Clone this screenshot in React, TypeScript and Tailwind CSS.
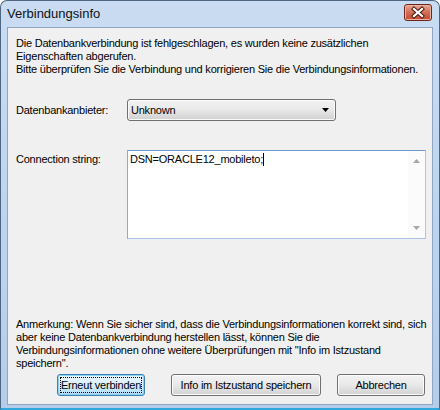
import React from "react";

function WinButton({ label, width, isDefault }: { label: string; width: string; isDefault?: boolean }) {
  return (
    <div
      className={
        "h-[22px] rounded-[3px] border flex items-center justify-center p-[2px] whitespace-nowrap " +
        width +
        (isDefault
          ? " border-[#3c7fb1] bg-gradient-to-b from-[#eaf6fd] via-[#d9f0fc] to-[#a7d9f5] shadow-[inset_0_0_0_1px_#8ad3f7]"
          : " border-[#707070] bg-gradient-to-b from-[#f3f3f3] via-[#e8e8e8] to-[#d2d2d2] shadow-[inset_0_0_0_1px_#fcfcfc]")
      }
    >
      <div
        className={
          "w-full h-full flex items-center justify-center " +
          (isDefault ? "border border-dotted border-black" : "border border-transparent")
        }
      >
        {label}
      </div>
    </div>
  );
}

export default function App() {
  return (
    <div className="w-[440px] h-[410px] bg-white">
      <div className="w-[440px] h-[410px] flex flex-col rounded-t-[7px] border border-[#4f6682] border-b-2 border-b-[#2fa8dc] bg-gradient-to-b from-[#c9dcf2] to-[#b5cdea] px-[6px] pb-[3px] font-['Liberation_Sans',Arial,sans-serif] text-[11px] leading-[13px] tracking-[-0.22px] text-black">
        {/* title bar */}
        <div className="h-[26px] shrink-0 flex items-start">
          <span className="mt-[5px] text-[13px] leading-[16px] tracking-normal text-[#111]">Verbindungsinfo</span>
          <div className="relative ml-auto mr-[1px] mt-[3px] w-[28px] h-[17px] rounded-[3px] border border-[#6e2418] bg-gradient-to-b from-[#e9a897] via-[#cf6d55] to-[#c4492f] shadow-[inset_0_0_0_1px_#eeb2a3]">
            <svg className="absolute left-0 top-0" width="26" height="15" viewBox="0 0 26 15">
              <path d="M9 4 L17 11 M17 4 L9 11" stroke="#4b1b12" strokeWidth="4.2" strokeLinecap="square" fill="none" />
              <path d="M9 4 L17 11 M17 4 L9 11" stroke="#ffffff" strokeWidth="2.2" strokeLinecap="square" fill="none" />
            </svg>
          </div>
        </div>

        {/* client area */}
        <div className="flex-1 flex flex-col border border-[#8ea6c2] bg-[#f0f0f0] pt-[9px] pb-[8px]">
          <p className="pl-[8px] whitespace-nowrap">
            Die Datenbankverbindung ist fehlgeschlagen, es wurden keine zusätzlichen
            <br />
            Eigenschaften abgerufen.
            <br />
            Bitte überprüfen Sie die Verbindung und korrigieren Sie die Verbindungsinformationen.
          </p>

          <div className="mt-[23px] pl-[8px] flex items-center">
            <span className="w-[111px]">Datenbankanbieter:</span>
            <div className="w-[209px] h-[22px] rounded-[3px] border border-[#707070] bg-gradient-to-b from-[#f3f3f3] via-[#e8e8e8] to-[#d0d0d0] shadow-[inset_0_0_0_1px_#fbfbfb] flex items-center pl-[3px] pr-[5px]">
              <span>Unknown</span>
              <svg className="ml-auto" width="8" height="4" viewBox="0 0 8 4">
                <path d="M0 0 H7 L3.5 4 Z" fill="#000" />
              </svg>
            </div>
          </div>

          <div className="mt-[29px] pl-[8px] flex items-start">
            <span className="w-[111px] pt-[3px]">Connection string:</span>
            <div className="w-[299px] h-[89px] border border-[#a9c3e4] border-t-[#6c9ad0] border-l-[#87acd8] bg-white flex">
              <div className="flex-1 pl-[2px] pt-[2px] flex items-start">
                <span>DSN=ORACLE12_mobileto;</span>
                <span className="w-[1px] h-[13px] bg-black" />
              </div>
              <div className="w-[17px] bg-[#fbfbfb] flex flex-col items-center justify-between pt-[8px] pb-[8px]">
                <svg width="7" height="4" viewBox="0 0 7 4">
                  <path d="M0 4 H7 L3.5 0 Z" fill="#a8a8a8" />
                </svg>
                <svg width="7" height="4" viewBox="0 0 7 4">
                  <path d="M0 0 H7 L3.5 4 Z" fill="#a8a8a8" />
                </svg>
              </div>
            </div>
          </div>

          <div className="flex-1" />

          <p className="pl-[8px] whitespace-nowrap">
            Anmerkung: Wenn Sie sicher sind, dass die Verbindungsinformationen korrekt sind, sich
            <br />
            aber keine Datenbankverbindung herstellen lässt, können Sie die
            <br />
            Verbindungsinformationen ohne weitere Überprüfungen mit "Info im Istzustand
            <br />
            speichern".
          </p>

          <div className="mt-[4px] pl-[49px] flex">
            <WinButton label="Erneut verbinden" width="w-[88px]" isDefault />
            <div className="ml-[26px]">
              <WinButton label="Info im Istzustand speichern" width="w-[150px]" />
            </div>
            <div className="ml-[16px]">
              <WinButton label="Abbrechen" width="w-[88px]" />
            </div>
          </div>
        </div>
      </div>
    </div>
  );
}
